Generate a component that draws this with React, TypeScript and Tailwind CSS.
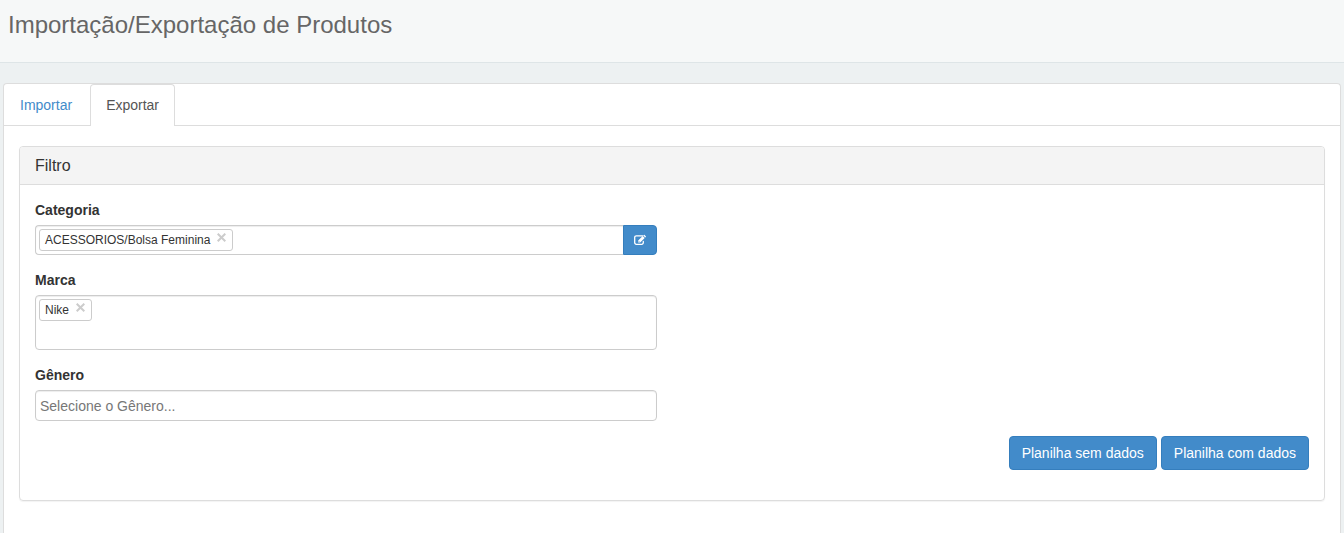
import React, { useState } from "react";

function EditIcon() {
  return (
    <svg viewBox="0 0 12 12" className="h-3 w-3" aria-hidden="true">
      <path d="M8.6 1.8H2.3a1.6 1.6 0 0 0-1.6 1.6v5.3a1.6 1.6 0 0 0 1.6 1.6h5.4a1.6 1.6 0 0 0 1.6-1.6V7.4" fill="none" stroke="currentColor" strokeWidth="1.3" strokeLinecap="round" />
      <path d="M4.2 6.6L8.7 2.1 10.7 4.1 6.2 8.6h-2zM9.2 1.6l.6-.6q.4-.4.8 0l1.2 1.2q.4.4 0 .8l-.6.6z" fill="currentColor" />
      <path d="M4.7 7.1l1 1" stroke="#428bca" strokeWidth=".6" />
    </svg>
  );
}

function Tag({ text, onRemove }: { text: string; onRemove: () => void }) {
  return (
    <span className="flex h-[22px] shrink-0 items-start gap-[7px] rounded-[3px] border border-[#ccc] bg-white pr-[6px] pl-[5px] text-xs leading-5 text-[#333]">
      {text}
      <button type="button" onClick={onRemove} aria-label={`Remover ${text}`} className="pt-[3px] text-[#ccc]">
        <svg viewBox="0 0 9 9" className="h-[9px] w-[9px]" fill="none" stroke="currentColor" strokeWidth="2" aria-hidden="true">
          <path d="M.7.7l7.6 7.6M8.3.7l-7.6 7.6" />
        </svg>
      </button>
    </span>
  );
}

const fieldClass = "border border-[#ccc] bg-white shadow-[inset_0_1px_1px_rgba(0,0,0,0.075)]";
const labelClass = "mb-[5px] block leading-5 font-bold";
const actionClass = "h-[34px] rounded border border-[#357ebd] bg-[#428bca] px-3 leading-5 text-white";

function TagInput({ id, tags, onChange, className }: { id: string; tags: string[]; onChange: (tags: string[]) => void; className: string }) {
  return (
    <div className={`flex min-w-0 flex-1 items-start gap-1 p-[3px] ${fieldClass} ${className}`}>
      {tags.map((tag) => (
        <Tag key={tag} text={tag} onRemove={() => onChange(tags.filter((t) => t !== tag))} />
      ))}
      <input id={id} type="text" className="h-[22px] min-w-0 flex-1 outline-none" />
    </div>
  );
}

export default function App() {
  const [categories, setCategories] = useState(["ACESSORIOS/Bolsa Feminina"]);
  const [brands, setBrands] = useState(["Nike"]);

  return (
    <div className="flex min-h-screen flex-col bg-[#edf1f2] font-['Liberation_Sans',Arial,sans-serif] text-sm text-[#333]">
      <header className="border-b border-[#dee5e7] bg-[#f6f8f8] px-2 pt-3 pb-6">
        <h1 className="text-2xl leading-[26px] text-[#666]">Importação/Exportação de Produtos</h1>
      </header>
      <main className="flex flex-1 flex-col px-[3px] pt-5">
        <section className="flex-1 rounded-t border border-b-0 border-[#ddd] bg-white">
          <nav className="flex border-b border-[#ddd]">
            <a href="#importar" className="px-4 pt-[11px] pb-[10px] leading-5 text-[#428bca]">Importar</a>
            <a href="#exportar" aria-current="page" className="-mb-px ml-[2px] rounded-t border border-b-0 border-[#ddd] bg-white px-[15px] pt-[10px] pb-[11px] leading-5 text-[#555]">Exportar</a>
          </nav>
          <div className="px-[15px] py-5">
            <form className="rounded border border-[#ddd] shadow-[0_1px_1px_rgba(0,0,0,0.05)]" onSubmit={(e) => e.preventDefault()}>
              <h2 className="rounded-t-[3px] border-b border-[#ddd] bg-[#f4f4f4] px-[15px] pt-[9px] pb-2 text-base leading-5">Filtro</h2>
              <div className="px-[15px] pt-[15px] pb-[30px]">
                <div className="flex w-[calc(50%-15px)] flex-col gap-[15px]">
                  <div>
                    <label htmlFor="categoria" className={labelClass}>Categoria</label>
                    <div className="flex">
                      <TagInput id="categoria" tags={categories} onChange={setCategories} className="h-[30px] rounded-l border-r-0" />
                      <button type="button" aria-label="Editar categoria" className="flex w-[34px] items-center justify-center rounded-r border border-[#357ebd] bg-[#428bca] text-white">
                        <EditIcon />
                      </button>
                    </div>
                  </div>
                  <div>
                    <label htmlFor="marca" className={labelClass}>Marca</label>
                    <TagInput id="marca" tags={brands} onChange={setBrands} className="h-[55px] rounded" />
                  </div>
                  <div>
                    <label htmlFor="genero" className={labelClass}>Gênero</label>
                    <input id="genero" type="text" placeholder="Selecione o Gênero..." className={`block h-[31px] w-full rounded px-1 outline-none placeholder:text-[#777] ${fieldClass}`} />
                  </div>
                </div>
                <div className="mt-[15px] flex justify-end gap-1">
                  <button type="button" className={actionClass}>Planilha sem dados</button>
                  <button type="button" className={actionClass}>Planilha com dados</button>
                </div>
              </div>
            </form>
          </div>
        </section>
      </main>
    </div>
  );
}
